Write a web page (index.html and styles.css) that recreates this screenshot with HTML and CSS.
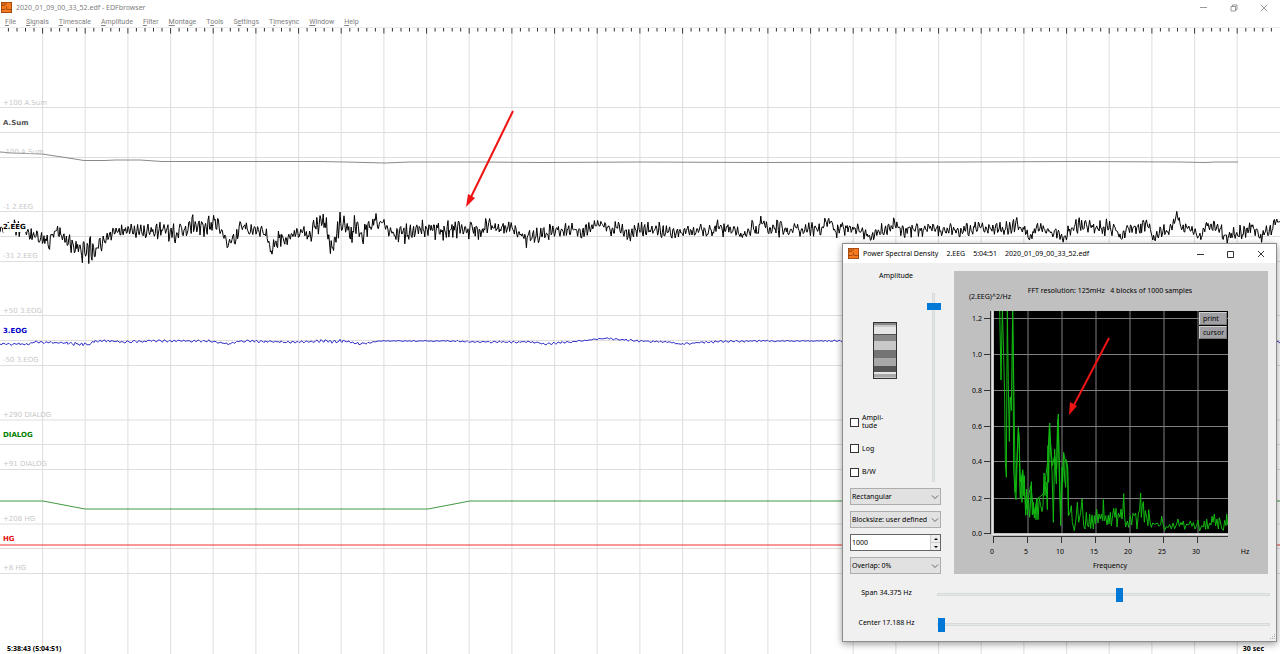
FILE: index.html
```html
<!DOCTYPE html>
<html lang="en">
<head>
<meta charset="utf-8">
<title>2020_01_09_00_33_52.edf - EDFbrowser</title>
<link rel="stylesheet" href="styles.css">
</head>
<body>
<div class="app">
  <header class="titlebar">
    <svg class="logo" viewBox="0 0 11 11"><rect width="11" height="11" fill="#f47a20"/><path d="M0 7.500h4l1-1M5.500 4.500v3M6 7.500h5M1 2h5M1 3.500h3M0 .5h11M.5 0v11M10.500 0v11M0 10.500h11" fill="none" stroke="#8a3b08" stroke-width=".7"/></svg>
    <h1 class="title">2020_01_09_00_33_52.edf - EDFbrowser</h1>
    <div class="window-buttons">
      <button type="button" aria-label="Minimize"><svg viewBox="0 0 8 8"><path d="M0 3.500h7"/></svg></button>
      <button type="button" aria-label="Restore"><svg viewBox="0 0 8 8"><path d="M1 2.500h4.500v4.500H1zM2.500 2.500V1H7v4.500H5.500"/></svg></button>
      <button type="button" aria-label="Close"><svg viewBox="0 0 8 8"><path d="M1 1l6 6M7 1L1 7"/></svg></button>
    </div>
  </header>
  <nav class="menubar">
    <button type="button"><u>F</u>ile</button>
    <button type="button"><u>S</u>ignals</button>
    <button type="button"><u>T</u>imescale</button>
    <button type="button"><u>A</u>mplitude</button>
    <button type="button"><u>F</u>ilter</button>
    <button type="button"><u>M</u>ontage</button>
    <button type="button">T<u>o</u>ols</button>
    <button type="button">S<u>e</u>ttings</button>
    <button type="button">T<u>i</u>mesync</button>
    <button type="button"><u>W</u>indow</button>
    <button type="button"><u>H</u>elp</button>
  </nav>

  <main class="recording">
    <svg class="traces" viewBox="0 28 1280 626" preserveAspectRatio="xMinYMin slice" role="img" aria-label="Signal traces">
      <path id="grid" class="grid"/>
      <path id="ruler" class="ruler"/>
      <polyline class="trace sum" points="0,152 12,153 42,154 62,157 84,160.500 105,160.500 115,160 140,160 162,161.500 320,161.500 345,162 385,163 410,162 480,162 540,162.500 640,162 760,162.500 960,162 1080,161.500 1180,162 1205,162.500 1215,162 1238,162"/>
      <polyline id="eeg" class="trace eeg"/>
      <polyline id="eog" class="trace eog"/>
      <polyline class="trace dialog-line" points="0,501 43,501 85,509 428,509 470,501 1280,501"/>
      <path class="trace hg" d="M0 545H1280"/>
      <path class="arrow" d="M513 111L471 197"/>
      <path class="arrow-head" d="M466 207L468 194L475 198Z"/>
    </svg>
    <span class="tag faint sum-high">+100 A.Sum</span>
    <span class="tag name sum-name">A.Sum</span>
    <span class="tag faint sum-low">-100 A.Sum</span>
    <span class="tag faint eeg-high">-1 2.EEG</span>
    <span class="tag name eeg-name">2.EEG</span>
    <span class="tag faint eeg-low">-31 2.EEG</span>
    <span class="tag faint eog-high">+50 3.EOG</span>
    <span class="tag name eog-name">3.EOG</span>
    <span class="tag faint eog-low">-50 3.EOG</span>
    <span class="tag faint dia-high">+290 DIALOG</span>
    <span class="tag name dia-name">DIALOG</span>
    <span class="tag faint dia-low">+91 DIALOG</span>
    <span class="tag faint hg-high">+208 HG</span>
    <span class="tag name hg-name">HG</span>
    <span class="tag faint hg-low">+8 HG</span>
    <div class="timeline"><span>5:38:43 (5:04:51)</span><span>30 sec</span></div>
  </main>

  <section class="psd" role="dialog" aria-labelledby="psd-title">
    <header class="psd-titlebar">
      <svg class="logo" viewBox="0 0 11 11"><rect width="11" height="11" fill="#f47a20"/><path d="M0 7.500h4l1-1M5.500 4.500v3M6 7.500h5M1 2h5M1 3.500h3M0 .5h11M.5 0v11M10.500 0v11M0 10.500h11" fill="none" stroke="#8a3b08" stroke-width=".7"/></svg>
      <h2 class="title" id="psd-title"><span>Power Spectral Density</span><span>2.EEG</span><span>5:04:51</span><span>2020_01_09_00_33_52.edf</span></h2>
      <div class="window-buttons">
        <button type="button" aria-label="Minimize"><svg viewBox="0 0 8 8"><path d="M0 4.500h7"/></svg></button>
        <button type="button" aria-label="Maximize"><svg viewBox="0 0 8 8"><path d="M.5 1.500h6v6h-6z"/></svg></button>
        <button type="button" aria-label="Close"><svg viewBox="0 0 8 8"><path d="M1 1l6 6M7 1L1 7"/></svg></button>
      </div>
    </header>
    <div class="psd-body">
      <div class="controls">
        <div class="amp">
          <div class="amp-main">
            <label class="amp-label" for="amp">Amplitude</label>
            <svg class="wheel" viewBox="0 0 24 57" role="img" aria-label="Amplitude wheel">
              <rect width="24" height="57" fill="#c8c8c8"/>
              <path fill="#888" d="M0 0h24v3H0zM0 13h24v6H0z"/>
              <path fill="#e6e6e6" d="M0 5h24v7H0zM0 50h24v2H0z"/>
              <path fill="#555" d="M0 12h24v1H0zM0 44h24v6H0z"/>
              <path fill="#747474" d="M0 28h24v8H0z"/>
              <path fill="#a8a8a8" d="M0 36h24v8H0zM0 52h24v3H0z"/>
              <rect x=".5" y=".5" width="23" height="56" fill="none" stroke="#333"/>
            </svg>
            <div class="checks">
              <label><input type="checkbox"><span>Ampli-<br>tude</span></label>
              <label><input type="checkbox"><span>Log</span></label>
              <label><input type="checkbox"><span>B/W</span></label>
            </div>
          </div>
          <input class="slider vertical" id="amp" type="range" min="0" max="100" value="95">
        </div>
        <div class="field"><select aria-label="Window function"><option>Rectangular</option></select><svg class="chevron" viewBox="0 0 8 8"><path d="M1 2.500l3 3 3-3"/></svg></div>
        <div class="field"><select aria-label="Block size mode"><option>Blocksize: user defined</option></select><svg class="chevron" viewBox="0 0 8 8"><path d="M1 2.500l3 3 3-3"/></svg></div>
        <div class="field spin">
          <input type="text" inputmode="numeric" value="1000" aria-label="Block size">
          <div class="steps">
            <button type="button" aria-label="Increase"><svg viewBox="0 0 6 4"><path d="M1 3h4L3 1z"/></svg></button>
            <button type="button" aria-label="Decrease"><svg viewBox="0 0 6 4"><path d="M1 1h4L3 3z"/></svg></button>
          </div>
        </div>
        <div class="field"><select aria-label="Overlap"><option>Overlap: 0%</option></select><svg class="chevron" viewBox="0 0 8 8"><path d="M1 2.500l3 3 3-3"/></svg></div>
      </div>
      <div class="chart">
        <svg class="plot" viewBox="0 0 314 302" role="img" aria-label="Power spectrum">
          <rect x="40" y="40" width="234" height="222" fill="#000"/>
          <path class="plot-grid" d="M74 40V262M108 40V262M142 40V262M176 40V262M210 40V262M244 40V262M40 47.500H274M40 83.500H274M40 119.500H274M40 155.500H274M40 190.500H274M40 227.500H274"/>
          <svg x="40" y="40" width="234" height="222" viewBox="120 -264 702 666">
            <polyline class="spectrum" points="137,-270 141,-57 145,-270 149,-130 152,-5 154,190 157,235 160,-270 163,-40 166,127 168,0 169,-6 172,35 176,-270 179,210 183,285 186,302 189,200 193,90 196,115 197,250 199,300 202,235 204,310 206,212 209,290 211,230 213,300 215,349 218,270 220,348 223,295 227,355 230,300 232,248 235,348 238,310 241,357 244,325 246,362 249,298 252,362 256,298 260,320 264,338 267,320 270,222 273,290 276,248 278,285 280,332 282,140 284,250 287,72 290,160 294,215 298,370 302,150 305,225 307,255 310,90 313,45 316,240 320,380 324,205 326,250 329,160 332,240 335,265 337,182 341,204 343,350 348,340 352,320 355,370 361,395 366,360 370,310 374,370 380,340 384,300 389,380 393,390 397,340 400,378 404,384 407,345 410,388 414,348 418,390 421,350 424,374 428,330 432,372 435,345 439,360 442,346 446,365 448,302 451,366 455,350 459,378 463,348 465,375 469,340 472,380 476,350 479,328 483,355 486,328 489,384 493,342 498,355 501,330 504,360 507,330 509,284 512,355 515,384 520,366 524,385 529,350 533,378 537,343 541,350 545,342 549,390 553,345 557,332 560,282 562,355 565,320 568,308 571,370 574,335 578,355 582,380 584,332 588,368 592,385 596,372 602,376 610,372 615,382 620,377 623,352 628,378 632,394 637,382 642,386 647,376 652,390 657,372 662,389 668,375 672,360 676,382 681,370 684,378 688,366 692,391 698,375 704,378 709,366 714,382 718,370 723,390 727,382 732,364 737,396 743,380 748,384 751,366 755,391 758,360 762,390 767,372 771,378 774,352 777,370 781,345 785,380 789,360 793,390 796,356 800,372 803,388 808,394 812,364 816,380 818,345 821,378"/>
            <polyline class="spectrum" points="176,-270 181,70 184,280 193,85 200,250 206,215 216,330 230,260 240,345 249,300 268,285 281,190 286,80 295,200 302,170 308,210 312,60 320,350 329,165 341,210 344,350"/>
          </svg>
          <path class="axis" d="M36.500 40V262.500M30 47.500H37M30 83.500H37M30 119.500H37M30 155.500H37M30 190.500H37M30 227.500H37M30 262.500H37M39 265.500H274M39.500 265V272M73.500 265V272M107.500 265V272M141.500 265V272M175.500 265V272M209.500 265V272M243.500 265V272"/>
          <path stroke="#e4e4e4" d="M38.500 40V264M38 263.500H274"/>
          <g class="plot-text">
            <text x="15" y="28">(2.EEG)^2/Hz</text>
            <g text-anchor="middle"><text x="156" y="22" xml:space="preserve">FFT resolution: 125mHz   4 blocks of 1000 samples</text><text x="156" y="297">Frequency</text></g>
            <g text-anchor="end"><text x="28" y="50">1.2</text><text x="28" y="86">1.0</text><text x="28" y="122">0.8</text><text x="28" y="158">0.6</text><text x="28" y="193">0.4</text><text x="28" y="230">0.2</text><text x="28" y="265">0.0</text></g>
            <g text-anchor="middle"><text x="38" y="283">0</text><text x="72" y="283">5</text><text x="106" y="283">10</text><text x="140" y="283">15</text><text x="174" y="283">20</text><text x="208" y="283">25</text><text x="242" y="283">30</text><text x="291" y="283">Hz</text></g>
          </g>
          <path class="arrow" d="M155 67L120 134"/>
          <path class="arrow-head" d="M115 144L116 131L123 135Z"/>
        </svg>
        <div class="chart-buttons"><button type="button">print</button><button type="button">cursor</button></div>
      </div>
    </div>
    <div class="ranges">
      <label for="span">Span 34.375 Hz</label><input class="slider" id="span" type="range" min="0" max="100" value="55">
      <label for="center">Center 17.188 Hz</label><input class="slider" id="center" type="range" min="0" max="100" value="0">
    </div>
    <svg class="grip" viewBox="0 0 8 8"><path d="M6 1h1v1H6zM4 3h1v1H4zM6 3h1v1H6zM2 5h1v1H2zM4 5h1v1H4zM6 5h1v1H6z"/></svg>
  </section>
</div>
<script src="traces.js"></script>
</body>
</html>
```

FILE: traces.js
```js
// Seeded noise keeps the traces identical on every load.
let seed = 20200109;
function noise() {
  seed = (seed * 1664525 + 1013904223) % 4294967296;
  return seed / 2147483648 - 1;
}

function interpolate(points, x, column) {
  let i = 1;
  while (i < points.length - 1 && points[i][0] < x) i++;
  const a = points[i - 1], b = points[i];
  const t = Math.max(0, Math.min(1, (x - a[0]) / (b[0] - a[0])));
  return a[column] + (b[column] - a[column]) * t;
}

function trace(id, points, step, period, gain) {
  const out = [];
  let phase = 0;
  for (let x = 0; x <= 1280; x += step) {
    phase += step / period * Math.PI * 2 * (1 + noise() * 0.6);
    const amp = interpolate(points, x, 2) * gain;
    const y = interpolate(points, x, 1) + amp * (Math.sin(phase) * 0.65 + noise() * 0.65);
    out.push(x.toFixed(1) + "," + y.toFixed(1));
  }
  document.getElementById(id).setAttribute("points", out.join(" "));
}

// x, centre, amplitude
const eeg = [[0,231,5],[8,226,6],[20,228,8],[28,234,5],[40,238,5],[50,242,6],[56,231,5],[62,235,5],[68,243,7],[75,248,7],[82,252,9],[88,249,10],[95,250,9],[102,243,6],[110,234,5],[118,230,6],[128,231,6],[138,233,6],[145,234,6],[155,231,8],[165,230,7],[175,232,9],[183,232,8],[190,227,7],[193,224,8],[200,226,8],[210,225,9],[217,224,7],[223,234,5],[228,245,5],[235,240,5],[241,225,5],[250,230,4],[260,231,4],[266,235,5],[272,250,6],[278,238,8],[285,241,5],[292,234,5],[300,231,5],[310,234,6],[316,225,8],[325,222,8],[329,238,8],[332,250,8],[336,236,6],[340,224,10],[346,230,9],[352,230,12],[358,230,11],[362,236,8],[368,227,6],[374,222,7],[381,222,6],[388,230,5],[396,234,5],[405,234,7],[415,232,8],[425,229,7],[440,230,8],[450,230,8],[460,229,6],[470,231,8],[480,231,7],[490,226,7],[500,229,4],[510,227,5],[520,234,6],[527,238,7],[540,235,5],[550,232,6],[560,231,4],[570,229,5],[580,233,4],[590,228,6],[600,222,4],[610,230,5],[620,228,6],[630,234,5],[640,229,6],[650,230,5],[660,229,6],[670,233,4],[680,233,4],[690,231,5],[700,228,6],[710,231,5],[720,228,7],[730,229,7],[740,235,4],[748,234,4],[752,226,5],[757,233,4],[761,221,5],[770,230,5],[780,227,7],[790,231,5],[795,225,5],[800,231,5],[810,229,5],[820,230,5],[829,221,5],[835,231,6],[845,229,6],[855,229,4],[865,233,5],[870,239,4],[880,229,5],[890,227,6],[895,225,6],[903,232,6],[912,229,6],[922,231,4],[930,227,4],[940,231,5],[950,232,6],[960,230,5],[970,230,5],[980,228,5],[990,229,5],[1000,229,5],[1010,229,6],[1016,226,8],[1024,230,4],[1030,239,4],[1037,226,4],[1047,230,5],[1060,234,4],[1062,240,4],[1070,229,5],[1080,226,6],[1090,227,5],[1100,228,6],[1108,227,6],[1115,229,5],[1121,237,3],[1130,225,6],[1140,230,5],[1143,223,5],[1150,229,5],[1154,240,3],[1160,230,5],[1170,231,5],[1177,214,3],[1182,228,4],[1190,228,3],[1200,236,4],[1208,225,4],[1220,229,5],[1227,238,5],[1235,232,5],[1245,233,5],[1252,226,4],[1260,236,5],[1270,230,5],[1277,219,5],[1280,222,4]];
const eog = [[0,344,1],[28,344,1],[34,342,1],[60,343,1],[88,344,2],[95,341,1],[110,341,1],[125,342,1],[150,341,1],[210,341,1],[228,344,1],[240,341,1],[290,342,1],[333,341,2],[345,341,1],[360,344,1],[380,341,0.400],[450,341,0.500],[480,342,1],[530,342,1],[545,344,1],[570,342,1],[590,340,0.500],[607,338,1],[615,339,1],[640,341,1],[670,342,1],[678,344,1],[710,342,1],[745,341,1],[800,341,0.400],[845,341,1],[1280,342,1]];

trace("eeg", eeg, 0.8, 3.4, 1.15);
trace("eog", eog, 1, 5, 1);

// One division per second, five ruler ticks in each.
let grid = "", ruler = "";
for (let second = 1; second < 30; second++) {
  grid += `M${(second * 128 / 3 - 0.1).toFixed(1)} 33V654`;
}
for (const y of [107.5, 132.5, 157.5, 211.5, 236.5, 261.5, 315.5, 340.5, 365.5, 420, 444.5, 469.5, 524, 548.5, 573.5]) {
  grid += `M0 ${y}H1280`;
}
for (let tick = 1; tick < 150; tick++) {
  ruler += `M${(tick * 128 / 15 - 0.1).toFixed(1)} 28v${tick % 5 ? 3.5 : 5.5}`;
}
document.getElementById("grid").setAttribute("d", grid);
document.getElementById("ruler").setAttribute("d", ruler);
```

FILE: styles.css
```css
* { box-sizing: border-box; }

body {
  margin: 0;
  font: 7px/10px "Noto Sans", sans-serif;
  color: #000;
  background: #fff;
}

button, input, select {
  margin: 0;
  padding: 0;
  border: 0;
  font: inherit;
  color: inherit;
  background: none;
}

.app {
  position: relative;
  display: flex;
  flex-direction: column;
  min-height: 100vh;
  overflow: hidden;
}

.titlebar, .psd-titlebar {
  display: flex;
  align-items: center;
  gap: 4px;
}

.titlebar { height: 15px; padding-left: 1px; color: #808080; }
.logo { width: 11px; height: 11px; }

.title {
  flex: 1;
  margin: 0;
  font: 7px/12px "Noto Sans", sans-serif;
  white-space: nowrap;
}

.window-buttons { display: flex; }
.window-buttons button { width: 30px; height: 14px; display: grid; place-items: center; }
.window-buttons svg { width: 8px; height: 8px; fill: none; stroke: currentColor; stroke-width: 0.8; }
.titlebar .window-buttons { padding-right: 1px; }

.menubar {
  display: flex;
  gap: 10px;
  height: 13px;
  padding: 2px 5px 0;
  align-items: center;
  font-family: Roboto, sans-serif;
  color: #808080;
  border-bottom: 1px solid #ececec;
}

.recording { position: relative; flex: 1; display: flex; }
.traces { position: absolute; inset: 0; width: 100%; height: 100%; }
.grid { stroke: #dedede; fill: none; }
.ruler { stroke: #333; fill: none; }
.trace { fill: none; stroke-width: 1; }
.sum { stroke: #8a8a8a; }
.eeg { stroke: #000; }
.eog { stroke: #3535cc; }
.dialog-line { stroke: #3f9a3f; }
.hg { stroke: #f03030; }
.arrow { stroke: #f01414; stroke-width: 2; fill: none; }
.arrow-head { fill: #f01414; }

.tag {
  position: absolute;
  left: 3px;
  font: 7px/10px "DejaVu Sans", sans-serif;
  white-space: nowrap;
}
.faint { color: #c8c8c8; }
.name { font-weight: bold; }
.sum-high { top: 70px; }
.sum-name { top: 90px; color: #555; }
.sum-low { top: 119px; }
.eeg-high { top: 174px; }
.eeg-name { top: 195px; background: #fff; line-height: 9px; }
.eeg-low { top: 223px; }
.eog-high { top: 278px; }
.eog-name { top: 298px; color: #0000c8; }
.eog-low { top: 327px; }
.dia-high { top: 382px; }
.dia-name { top: 402px; color: #008000; }
.dia-low { top: 431px; }
.hg-high { top: 486px; }
.hg-name { top: 506px; color: #e01010; }
.hg-low { top: 535px; }

.timeline {
  position: relative;
  flex: 1;
  align-self: flex-end;
  display: flex;
  justify-content: space-between;
  padding: 0 16px 0 7px;
  font: bold 7px/10px "Noto Sans", sans-serif;
}

.psd {
  position: absolute;
  right: 3px;
  bottom: 12px;
  width: 435px;
  background: #f0f0f0;
  border: 1px solid #8c8c8c;
  box-shadow: 0 2px 7px rgba(0, 0, 0, 0.4);
}
.psd-titlebar { height: 19px; padding-left: 5px; background: #fff; }
.psd-titlebar .title { display: flex; gap: 8px; }

.psd-body {
  display: grid;
  grid-template-columns: 91px 1fr;
  gap: 13px;
  padding: 8px 8px 0 7px;
}

.controls { display: flex; flex-direction: column; gap: 6px; }
.amp { flex: 1; display: flex; justify-content: space-between; }
.amp-main { display: flex; flex-direction: column; }
.amp-label { padding-left: 29px; }
.wheel { width: 24px; height: 57px; margin: 41px 0 0 23px; }
.checks { display: flex; flex-direction: column; justify-content: space-between; flex: 1; padding: 35px 0 5px; }
.checks label { display: flex; align-items: center; gap: 3px; line-height: 8px; min-height: 10px; }
.checks input { appearance: none; width: 9px; height: 9px; border: 1px solid #333; background: #fff; }

.slider { appearance: none; display: block; min-width: 0; height: 14px; width: 100%; }
.slider::-webkit-slider-runnable-track { height: 3px; background: #e4e8e8; border: 1px solid #d6dada; }
.slider::-webkit-slider-thumb { appearance: none; width: 7px; height: 14px; margin-top: -6px; background: #0078d7; }
.vertical { writing-mode: vertical-lr; direction: rtl; width: 14px; height: 189px; margin: 22px 1px 0 0; }
.vertical::-webkit-slider-runnable-track { width: 3px; height: 100%; }
.vertical::-webkit-slider-thumb { width: 14px; height: 7px; margin: 0 0 0 -6px; }

.field { position: relative; height: 17px; flex: none; background: #e1e1e1; border: 1px solid #adadad; }
.field select { appearance: none; display: block; width: 100%; height: 15px; padding: 0 10px 0 1px; }
.chevron { position: absolute; right: 1px; top: 4px; width: 8px; height: 8px; fill: none; stroke: #444; stroke-width: 0.8; pointer-events: none; }
.spin { display: flex; background: #fff; border-color: #666; }
.spin input { flex: 1; min-width: 0; padding-left: 1px; }
.steps { display: grid; width: 10px; background: #eee; border-left: 1px solid #ccc; }
.steps button { display: grid; place-items: center; }
.steps button + button { border-top: 1px solid #ccc; }
.steps svg { width: 6px; height: 4px; }

.chart { position: relative; background: #c0c0c0; }
.plot { display: block; width: 100%; }
.plot-grid { stroke: #808084; fill: none; }
.spectrum { fill: none; stroke: #12b812; stroke-width: 3; }
.axis { stroke: #333; fill: none; }
.plot-text { font: 7px "Noto Sans", sans-serif; }
.chart-buttons { position: absolute; right: 41px; top: 41px; width: 28px; display: grid; gap: 1px; }
.chart-buttons button { height: 13px; padding-left: 3px; text-align: left; background: #a0a0a4; border: 1px solid; border-color: #d0d0d0 #777 #777 #d0d0d0; }

.ranges {
  display: grid;
  grid-template-columns: 87px 1fr;
  row-gap: 16px;
  align-items: center;
  padding: 13px 6px 10px 7px;
}
.ranges label { text-align: center; padding: 0 14px 3px 0; }
.grip { position: absolute; right: 0; bottom: 0; width: 8px; height: 8px; fill: #aaa; }
```
